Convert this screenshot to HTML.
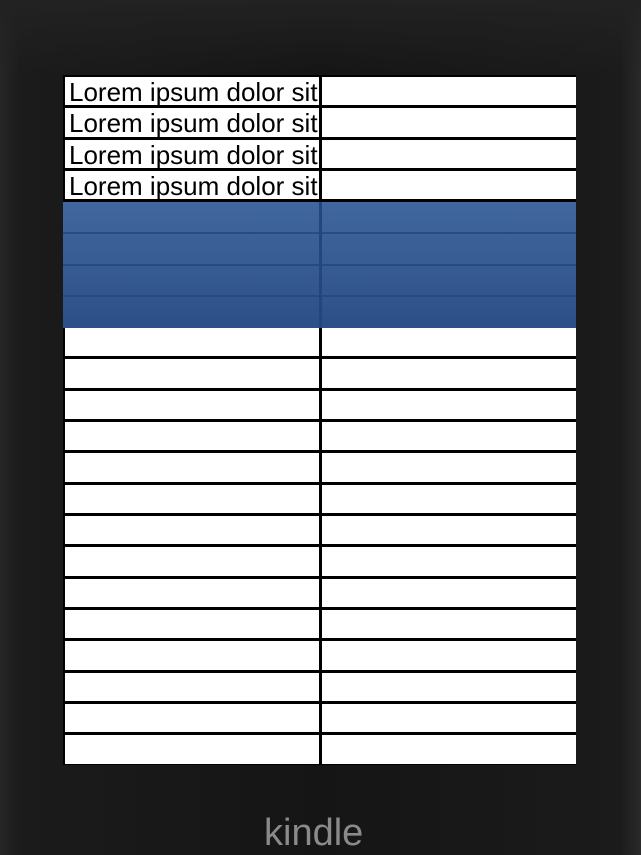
<!DOCTYPE html>
<html><head><style>
html,body{margin:0;padding:0;}
body{width:641px;height:834px;overflow:hidden;position:relative;background:linear-gradient(90deg,#262626 0,#1b1b1b 20px,#151515 50%,#1b1b1b 620px,#2a2a2a 641px);font-family:"Liberation Sans",sans-serif;}
.top{position:absolute;left:0;top:0;width:641px;height:75px;background:linear-gradient(#222,rgba(20,20,20,0));}
.scr{position:absolute;left:63px;top:75px;width:513px;height:690px;background:#000;}
.r{position:absolute;left:0;width:513px;}
.c{position:absolute;top:2px;bottom:1px;background:#fff;overflow:hidden;}
.c1{left:2px;width:254px;}
.c2{left:259px;width:254px;}
.t{font-size:26px;line-height:30px;margin-top:0px;padding-left:4px;color:#000;white-space:nowrap;}
.blue{position:absolute;left:0;top:127px;width:513px;height:126px;background:linear-gradient(#41679f,#2d4f88);}
.bl{position:absolute;left:0;width:513px;height:2px;background:#24467a;opacity:.8}
.kindle{position:absolute;left:264px;top:812px;font-size:38px;color:#8a8a8a;}
</style></head><body>
<div class="top"></div>
<div class="scr" id="s"></div>
<div class="kindle">kindle</div>
<script>
var s=document.getElementById('s'),h='';
for(var i=0;i<22;i++){
 var y=Math.round(i*31.35),n=Math.round((i+1)*31.35)-y;
 if(i>=4&&i<8)continue;
 var txt=i<4?'<div class="t">Lorem ipsum dolor sit</div>':'';
 h+='<div class="r" style="top:'+y+'px;height:'+n+'px"><div class="c c1">'+txt+'</div><div class="c c2"></div></div>';
}
h+='<div class="blue"><div class="bl" style="top:30px"></div><div class="bl" style="top:62px"></div><div class="bl" style="top:93px"></div><div style="position:absolute;left:256px;top:0;width:3px;height:126px;background:#24467a"></div></div>';
s.innerHTML=h;
</script>
</body></html>
